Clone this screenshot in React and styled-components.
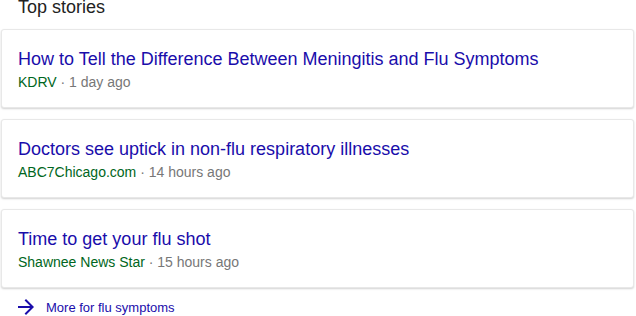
import styled, { createGlobalStyle } from "styled-components"

const GlobalStyle = createGlobalStyle`
* {
    box-sizing: border-box;
}
html, body {
    margin: 0;
    background-color: #fff;
    font-family: "Liberation Sans", Arial, sans-serif;
    overflow: hidden;
}
`

const Pagina = styled.div`
    display: flex;
    flex-direction: column;
    width: 636px;
    height: 316px;
    overflow: hidden;
`

const Cabecalho = styled.h2`
    margin: -4px 0 11px 0;
    padding-left: 18px;
    font-size: 18px;
    line-height: 22px;
    font-weight: 400;
    color: #222;
`

const ListaNoticias = styled.div`
    display: flex;
    flex-direction: column;
    gap: 11px;
    padding: 0 2px 0 1px;
`

const Cartao = styled.div`
    display: flex;
    flex-direction: column;
    height: 79px;
    padding: 18px 16px 15px 16px;
    border: 1px solid #e8e8e8;
    border-radius: 3px;
    box-shadow: 0 1px 2px rgba(0, 0, 0, 0.18);
    background-color: #fff;
`

const Titulo = styled.a`
    font-size: 18px;
    line-height: 22px;
    color: #1a0dab;
    text-decoration: none;
    white-space: nowrap;
`

const Fonte = styled.div`
    margin-top: 2px;
    font-size: 14px;
    line-height: 20px;
    color: #777;
    white-space: nowrap;
`

const NomeFonte = styled.span`
    color: #006621;
`

const MaisLink = styled.a`
    display: flex;
    align-items: center;
    gap: 8px;
    margin-top: 7px;
    padding-left: 14px;
    height: 24px;
    font-size: 13px;
    color: #1a0dab;
    text-decoration: none;
`

const Seta = () => (
    <svg width="24" height="24" viewBox="0 0 24 24" fill="#1a0dab">
        <path d="M12 4l-1.41 1.41L16.17 11H4v2h12.17l-5.58 5.59L12 20l8-8z" />
    </svg>
)

const noticias = [
    { id: 1, titulo: "How to Tell the Difference Between Meningitis and Flu Symptoms", fonte: "KDRV", tempo: "1 day ago" },
    { id: 2, titulo: "Doctors see uptick in non-flu respiratory illnesses", fonte: "ABC7Chicago.com", tempo: "14 hours ago" },
    { id: 3, titulo: "Time to get your flu shot", fonte: "Shawnee News Star", tempo: "15 hours ago" },
]

function App() {
    return (
        <>
            <GlobalStyle />
            <Pagina>
                <Cabecalho>Top stories</Cabecalho>
                <ListaNoticias>
                    {noticias.map((n) => (
                        <Cartao key={n.id}>
                            <Titulo href="#">{n.titulo}</Titulo>
                            <Fonte>
                                <NomeFonte>{n.fonte}</NomeFonte> · {n.tempo}
                            </Fonte>
                        </Cartao>
                    ))}
                </ListaNoticias>
                <MaisLink href="#">
                    <Seta />
                    More for flu symptoms
                </MaisLink>
            </Pagina>
        </>
    )
}

export default App
